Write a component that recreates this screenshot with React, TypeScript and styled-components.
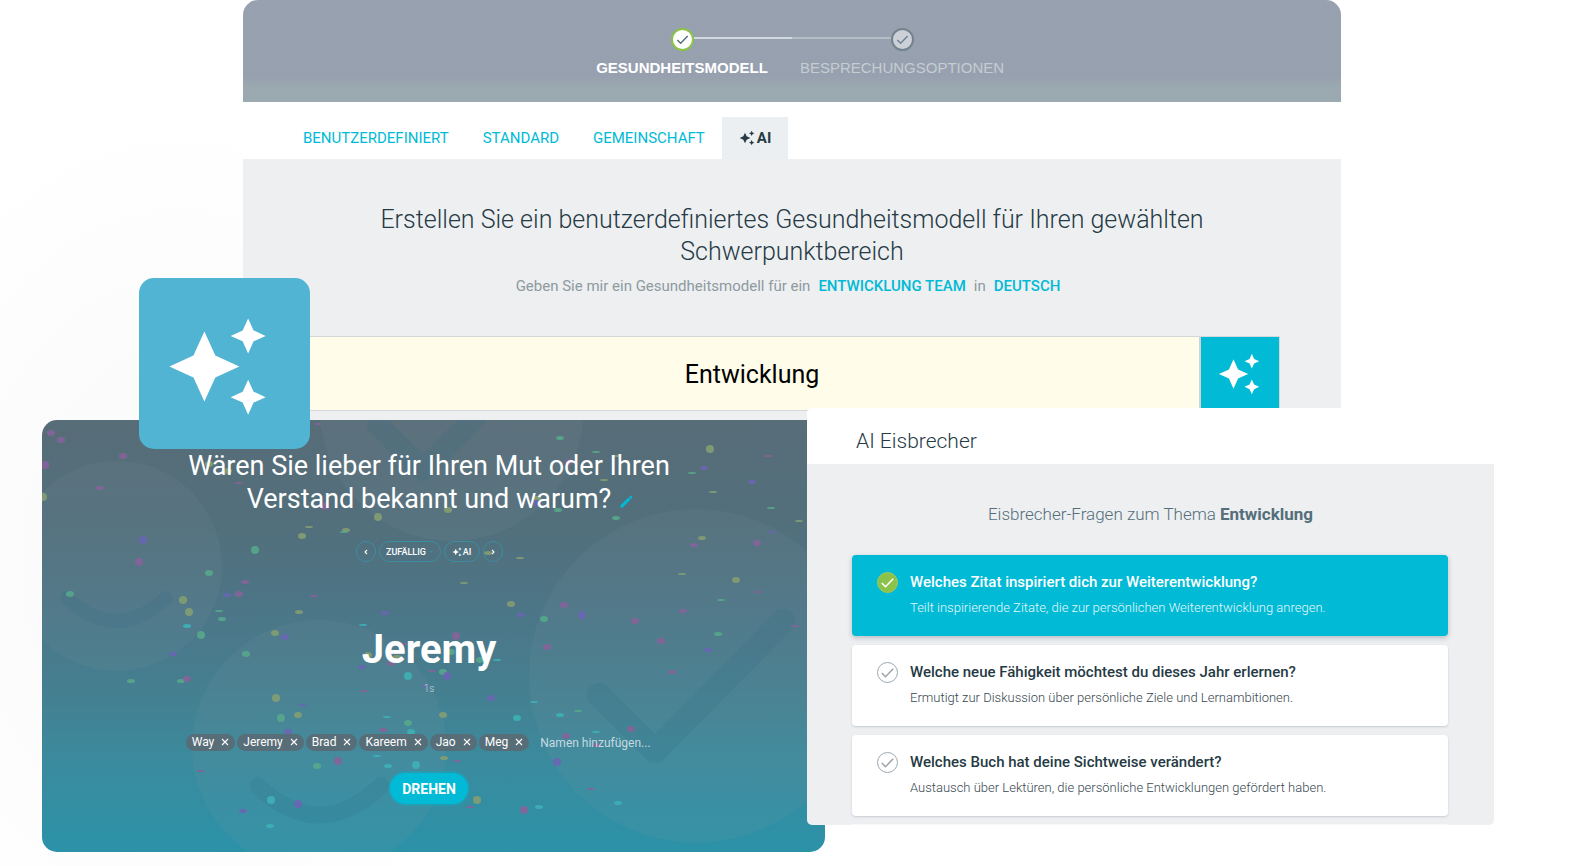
import React, { useState } from "react";
import styled, { createGlobalStyle, css } from "styled-components";

const GlobalStyle = createGlobalStyle`
  *, *::before, *::after { box-sizing: border-box; }
  body {
    margin: 0;
    background: radial-gradient(ellipse 340px 460px at 180px 560px, #f9f9f9, #ffffff);
    font-family: Roboto, "Liberation Sans", sans-serif;
    color: #263a44;
  }
  button, input, select { font: inherit; color: inherit; margin: 0; border: 0; padding: 0; background: none; }
  button, select, a { cursor: pointer; }
  h1, h2, h3, p, ul, ol { margin: 0; padding: 0; font-size: inherit; font-weight: inherit; list-style: none; }
`;

const cyan = "#00bad6";

/* ---------- stage: overlapping panels share one grid row ---------- */

const Stage = styled.main`
  display: grid;
  grid-template-columns:
    minmax(0, 42fr) minmax(0, 97fr) minmax(0, 104fr) minmax(0, 67fr) minmax(0, 497fr)
    minmax(0, 18fr) minmax(0, 516fr) minmax(0, 153fr) minmax(0, 91fr);
  align-items: start;
  padding-bottom: 14px;
`;

const ModelPanel = styled.section`
  grid-area: 1 / 4 / 2 / 8;
  border-radius: 15px 15px 0 0;
  overflow: hidden;
  background: #edeff1;
`;

const SpinPanel = styled.section`
  grid-area: 1 / 2 / 2 / 7;
  margin-top: 420px;
  position: relative;
  overflow: hidden;
  border-radius: 15px;
  color: #fff;
  background: linear-gradient(#576d78 0%, #526f7c 25%, #4d7586 42%, #457f90 62%, #3a8b9e 80%, #2b92a8 100%);
`;

const Tile = styled.div`
  grid-area: 1 / 3 / 2 / 5;
  z-index: 1;
  margin-top: 278px;
  height: 171px;
  display: grid;
  place-items: center;
  padding: 6px 14px 0 0;
  border-radius: 15px;
  background: #51b4d3;
  color: #fff;
`;

const IcePanel = styled.section`
  grid-area: 1 / 6 / 2 / 9;
  z-index: 1;
  margin-top: 408px;
  border-radius: 5px;
  overflow: hidden;
  background: #edeff1;
`;

/* ---------- icons ---------- */

const Sparkles = ({ size }: { size: number }) => (
  <svg width={size} height={size} viewBox="0 0 24 24" fill="currentColor" aria-hidden="true">
    <path d="M19 9l1.25-2.75L23 5l-2.75-1.25L19 1l-1.25 2.75L15 5l2.75 1.25L19 9zM11.5 9.5L9 4 6.5 9.5 1 12l5.5 2.5L9 20l2.5-5.5L17 12l-5.5-2.5zM19 15l-1.25 2.75L15 19l2.75 1.25L19 23l1.25-2.75L23 19l-2.75-1.25L19 15z" />
  </svg>
);

const Tick = ({ color, size = 21 }: { color: string; size?: number }) => (
  <svg width={size} height={size} viewBox="0 0 21 21" fill="none" stroke={color} strokeWidth="1.6" aria-hidden="true">
    <path d="M4.800 11l3.700 3.700L16.200 6.700" />
  </svg>
);

const Pencil = () => (
  <svg width="13" height="13" viewBox="0 0 24 24" fill={cyan} aria-hidden="true">
    <path d="M1 19v4h4L19.500 8.500l-4-4L1 19zM22.600 5.400a1.300 1.300 0 0 0 0-1.800l-2.200-2.200a1.300 1.300 0 0 0-1.800 0l-2 2 4 4 2-2z" />
  </svg>
);

const Chevron = ({ flip }: { flip?: boolean }) => (
  <svg width="6" height="6" viewBox="0 0 6 6" fill="none" stroke="currentColor" strokeWidth="1.1" aria-hidden="true">
    <path d={flip ? "M2 1l2 2-2 2" : "M4 1L2 3l2 2"} />
  </svg>
);

const Cross = () => (
  <svg width="8" height="8" viewBox="0 0 8 8" stroke="currentColor" strokeWidth="1.1" aria-hidden="true">
    <path d="M1 1l6 6M7 1L1 7" />
  </svg>
);

/* ---------- model panel ---------- */

const StepBar = styled.header`
  height: 102px;
  padding-top: 28px;
  background: linear-gradient(#97a1b0 0, #97a0af 74%, #9aa9af 86%, #9aaab0 100%);
`;

const Steps = styled.ol`
  display: flex;
  justify-content: center;
`;

const Step = styled.li<{ $active?: boolean }>`
  width: 220px;
  display: grid;
  justify-items: center;
  gap: 7px;
  font: ${(p) => (p.$active ? "bold" : "normal")} 15px/20px "Liberation Sans", Arial, sans-serif;
  color: ${(p) => (p.$active ? "#fff" : "#c5cdd2")};
`;

const StepTrack = styled.span<{ $active?: boolean }>`
  width: 100%;
  display: grid;
  grid-template-columns: 1fr 23px 1fr;
  align-items: center;
  &::before, &::after { content: ""; height: 2px; margin-bottom: 3px; }
  ${(p) => p.$active
    ? css`&::after { background: #d3dadd; }`
    : css`&::before { background: #b3bec4; }`}
`;

const StepDot = styled.span<{ $active?: boolean }>`
  height: 23px;
  display: grid;
  place-items: center;
  border-radius: 50%;
  border: 2px solid ${(p) => (p.$active ? "#8bc34a" : "#72838e")};
  background: ${(p) => (p.$active ? "#fff" : "#cbd1d6")};
`;

const Tabs = styled.nav`
  display: flex;
  padding: 15px 43px 0;
  background: #fff;
`;

const Tab = styled.button<{ $active?: boolean }>`
  height: 42px;
  display: flex;
  align-items: center;
  gap: 2px;
  padding: 0 17px;
  font-size: 15px;
  line-height: 20px;
  color: ${cyan};
  white-space: nowrap;
  ${(p) => p.$active && css`background: #ebeff2; color: #263a44; font-weight: 700;`}
`;

const ModelBody = styled.div`
  padding: 45px 61px 9px;
  text-align: center;
`;

const ModelTitle = styled.h1`
  max-width: 860px;
  margin: 0 auto;
  font-size: 25px;
  line-height: 32px;
  font-weight: 300;
`;

const ModelHint = styled.p`
  display: flex;
  justify-content: center;
  gap: 8px;
  margin: 8px 0 40px;
  padding-right: 8px;
  font-size: 15px;
  line-height: 20px;
  color: #8e9a9f;
  a { color: ${cyan}; font-weight: 500; text-decoration: none; }
`;

const TopicRow = styled.form`
  display: grid;
  grid-template-columns: 1fr 80px;
  height: 75px;
  border: 1px solid #d3d8db;
`;

const TopicInput = styled.input`
  min-width: 0;
  padding-top: 2px;
  text-align: center;
  font-size: 25px;
  line-height: 30px;
  color: #000;
  background: #fffde9;
`;

const TopicButton = styled.button`
  display: grid;
  place-items: center;
  border-left: 2px solid #cdd3d6;
  padding-right: 3px;
  background: ${cyan};
  color: #fff;
`;

/* ---------- spinner panel ---------- */

const Backdrop = styled.svg`
  position: absolute;
  inset: 0;
  width: 100%;
  height: 100%;
`;

const SpinBody = styled.div`
  position: relative;
  display: flex;
  flex-direction: column;
  align-items: center;
  padding: 30px 9px 48px 0;
`;

const Question = styled.h2`
  width: 520px;
  text-align: center;
  font-size: 27px;
  line-height: 33px;
`;

const EditButton = styled.button`
  width: 0;
  overflow: visible;
  white-space: nowrap;
  padding-left: 9px;
  margin-right: -9px;
  line-height: 13px;
`;

const Pills = styled.div`
  display: flex;
  gap: 3px;
  margin-top: 25px;
`;

const pill = css`
  height: 21px;
  display: flex;
  align-items: center;
  justify-content: center;
  border: 1px solid #3b8ea1;
  border-radius: 11px;
  font-size: 9px;
  line-height: 12px;
  font-weight: 500;
`;

const PillButton = styled.button<{ $round?: boolean }>`
  ${pill}
  width: ${(p) => (p.$round ? "20px" : "36px")};
  gap: 1px;
`;

const PillSelect = styled.span`
  ${pill}
  width: 62px;
  gap: 3px;
  &::after {
    content: "";
    border: 2px solid transparent;
    border-top-color: #3b8ea1;
    border-bottom: 0;
  }
  select { appearance: none; outline: 0; }
  option { color: #263a44; }
`;

const Winner = styled.p`
  margin-top: 64px;
  font-size: 40px;
  line-height: 48px;
  font-weight: 700;
`;

const Timer = styled.p`
  margin-top: 9px;
  font-size: 10px;
  line-height: 12px;
  font-weight: 300;
  color: #c3d5dc;
`;

const Names = styled.ul`
  display: flex;
  align-items: center;
  gap: 2px;
  margin-top: 37px;
`;

const Chip = styled.li`
  height: 17px;
  display: flex;
  align-items: center;
  gap: 7px;
  padding: 0 6px;
  border-radius: 9px;
  background: #576d78;
  font-size: 12px;
  line-height: 17px;
  button { display: grid; }
`;

const NameInput = styled.input`
  width: 141px;
  padding-left: 9px;
  font-size: 12px;
  line-height: 17px;
  &::placeholder { color: #c4dae0; opacity: 1; }
`;

const SpinButton = styled.button`
  height: 31px;
  margin-top: 21px;
  padding: 0 12px;
  border-radius: 16px;
  background: ${cyan};
  box-shadow: 0 0 0 2px rgba(0, 186, 214, 0.3);
  font-size: 14px;
  line-height: 20px;
  font-weight: 700;
`;

type Hue = "p" | "o" | "g" | "v" | "t";
const hues: Record<Hue, string> = { p: "#86639a", o: "#839d72", g: "#57a78b", v: "#6966b2", t: "#3eb0b6" };

/* x, y, half height, hue */
const confetti: [number, number, number, Hue][] = [
  [51, 433, 3, "p"], [61, 440, 3, "p"], [123, 456, 3, "p"], [45, 465, 4, "p"], [100, 488, 2, "p"],
  [43, 497, 4, "o"], [318, 424, 1, "p"], [209, 464, 3, "o"], [228, 471, 3, "o"], [239, 483, 1, "p"],
  [325, 506, 4, "p"], [378, 517, 4, "o"], [309, 527, 1, "o"], [302, 536, 3, "o"], [346, 530, 2, "o"],
  [344, 532, 1, "g"], [255, 550, 4, "g"], [143, 540, 4, "v"], [139, 562, 4, "p"], [209, 573, 3, "g"],
  [245, 582, 2, "p"], [227, 595, 2, "v"], [239, 594, 3, "p"], [314, 596, 1, "p"], [70, 594, 3, "g"],
  [183, 600, 4, "o"], [189, 612, 4, "o"], [219, 611, 1, "g"], [222, 619, 2, "g"], [187, 626, 2, "t"],
  [201, 635, 4, "g"], [299, 612, 2, "o"], [385, 613, 2, "v"], [363, 625, 1, "t"], [275, 633, 3, "o"],
  [285, 637, 3, "v"], [560, 438, 2, "g"], [569, 462, 3, "p"], [596, 452, 1, "g"], [616, 456, 1, "o"],
  [604, 480, 1, "o"], [710, 449, 4, "o"], [768, 456, 1, "p"], [692, 473, 1, "g"], [704, 468, 2, "v"],
  [752, 482, 2, "v"], [713, 492, 1, "o"], [771, 508, 1, "g"], [799, 521, 1, "o"], [537, 498, 2, "o"],
  [537, 503, 3, "v"], [448, 510, 3, "o"], [558, 510, 2, "g"], [616, 518, 2, "g"], [771, 532, 1, "v"],
  [702, 538, 2, "o"], [694, 545, 2, "p"], [757, 543, 3, "p"], [488, 553, 2, "o"], [520, 558, 1, "o"],
  [682, 574, 1, "o"], [464, 583, 1, "o"], [736, 580, 3, "o"], [758, 592, 1, "p"], [721, 600, 1, "g"],
  [511, 604, 3, "o"], [521, 615, 2, "v"], [544, 619, 3, "g"], [564, 605, 3, "p"], [582, 615, 4, "v"],
  [683, 611, 2, "p"], [635, 621, 3, "p"], [795, 626, 1, "p"], [718, 634, 2, "g"], [456, 636, 4, "p"],
  [547, 647, 3, "p"], [661, 641, 3, "p"], [708, 650, 2, "v"], [246, 654, 3, "g"], [173, 654, 2, "v"],
  [131, 681, 2, "g"], [181, 681, 2, "g"], [187, 679, 3, "p"], [276, 698, 4, "o"], [281, 718, 4, "g"],
  [298, 715, 3, "o"], [302, 705, 1, "v"], [288, 732, 3, "v"], [362, 667, 2, "v"], [364, 691, 1, "p"],
  [368, 655, 3, "o"], [405, 644, 1, "p"], [391, 663, 3, "p"], [397, 657, 2, "o"], [408, 676, 4, "t"],
  [425, 686, 1, "v"], [387, 717, 1, "t"], [408, 723, 3, "g"], [383, 730, 2, "p"], [411, 732, 3, "t"],
  [377, 756, 1, "t"], [338, 761, 4, "p"], [317, 766, 3, "g"], [388, 766, 2, "t"], [416, 765, 4, "t"],
  [201, 771, 1, "p"], [271, 800, 4, "t"], [298, 804, 4, "v"], [243, 811, 2, "v"], [270, 826, 2, "t"],
  [480, 660, 3, "g"], [451, 652, 3, "g"], [497, 660, 1, "t"], [432, 671, 1, "p"], [443, 672, 3, "g"],
  [447, 676, 4, "v"], [491, 698, 3, "v"], [534, 702, 1, "t"], [517, 718, 3, "t"], [443, 715, 3, "o"],
  [560, 715, 2, "t"], [578, 711, 1, "g"], [672, 672, 2, "p"], [596, 732, 1, "t"], [566, 736, 3, "p"],
  [631, 729, 3, "p"], [597, 745, 2, "p"], [557, 762, 4, "v"], [444, 758, 2, "o"], [457, 761, 1, "p"],
  [591, 789, 1, "p"], [618, 803, 2, "t"], [477, 800, 4, "o"], [470, 807, 1, "p"], [524, 810, 4, "p"],
  [539, 807, 2, "t"],
];

const SpinBackdrop = () => (
  <Backdrop viewBox="42 420 783 432" preserveAspectRatio="xMidYMid slice" aria-hidden="true">
    <g fill="#8da0a8" fillOpacity="0.1">
      <circle cx="117" cy="566" r="105" />
      <circle cx="452" cy="409" r="132" />
      <circle cx="319" cy="747" r="127" />
      <circle cx="696" cy="676" r="167" />
    </g>
    <g fill="none" stroke="#2e6c80" strokeOpacity="0.16" strokeLinecap="round" strokeLinejoin="round">
      <path d="M67 598Q116 644 166 598" strokeWidth="14" />
      <path d="M378 425l45 45 54-54" strokeWidth="22" />
      <path d="M258 786Q319 844 381 786" strokeWidth="17" />
      <path d="M599 695l56 56L783 621" strokeWidth="24" />
    </g>
    {confetti.map(([x, y, ry, hue]) => (
      <ellipse key={`${x}-${y}`} cx={x} cy={y} rx="4" ry={ry} fill={hues[hue]} fillOpacity="0.9" />
    ))}
  </Backdrop>
);

/* ---------- icebreaker panel ---------- */

const IceHeader = styled.header`
  padding: 20px 49px 10px;
  background: #fff;
  font-size: 21px;
  line-height: 26px;
  font-weight: 300;
`;

const IceTopic = styled.p`
  padding: 39px 0 30px;
  text-align: center;
  font-size: 17px;
  line-height: 22px;
  font-weight: 300;
  color: #546e7a;
  b { font-weight: 700; }
`;

const IceList = styled.ul`
  display: grid;
  gap: 9px;
  margin: 0 46px 0 45px;
  padding-bottom: 8px;
  border-bottom: 1px solid #f8f9fa;
`;

const IceCard = styled.label<{ $selected: boolean }>`
  min-height: 81px;
  display: grid;
  grid-template-columns: 21px 1fr;
  column-gap: 12px;
  row-gap: 5px;
  align-content: start;
  padding: 17px 25px;
  border-radius: 4px;
  cursor: pointer;
  color: ${(p) => (p.$selected ? "#fff" : "#263a44")};
  background: ${(p) => (p.$selected ? cyan : "#fff")};
  box-shadow: ${(p) => (p.$selected ? "0 2px 5px rgba(60, 80, 100, 0.3)" : "0 1px 2px rgba(60, 80, 100, 0.22)")};
`;

const CheckMark = styled.span<{ $selected: boolean }>`
  display: grid;
  height: 21px;
  & > * { grid-area: 1 / 1; }
  input {
    appearance: none;
    width: 21px;
    height: 21px;
    border-radius: 50%;
    border: ${(p) => (p.$selected ? "1px solid #a5c95a" : "1px solid #9aa7b0")};
    background: ${(p) => (p.$selected ? "#8bc34a" : "transparent")};
  }
  svg { pointer-events: none; }
`;

const CardTitle = styled.span`
  font-size: 15px;
  line-height: 21px;
  font-weight: 500;
`;

const CardText = styled.span<{ $selected: boolean }>`
  grid-column: 2;
  font-size: 13px;
  line-height: 20px;
  font-weight: 300;
  color: ${(p) => (p.$selected ? "#e6f8fb" : "#37474f")};
`;

const questions = [
  ["Welches Zitat inspiriert dich zur Weiterentwicklung?", "Teilt inspirierende Zitate, die zur persönlichen Weiterentwicklung anregen."],
  ["Welche neue Fähigkeit möchtest du dieses Jahr erlernen?", "Ermutigt zur Diskussion über persönliche Ziele und Lernambitionen."],
  ["Welches Buch hat deine Sichtweise verändert?", "Austausch über Lektüren, die persönliche Entwicklungen gefördert haben."],
];

const names = ["Way", "Jeremy", "Brad", "Kareem", "Jao", "Meg"];

export default function App() {
  const [selected, setSelected] = useState(0);

  return (
    <>
      <GlobalStyle />
      <Stage>
        <ModelPanel>
          <StepBar>
            <Steps>
              <Step $active>
                <StepTrack $active><StepDot $active><Tick size={19} color="#546e7a" /></StepDot></StepTrack>
                GESUNDHEITSMODELL
              </Step>
              <Step>
                <StepTrack><StepDot><Tick size={19} color="#6f7f94" /></StepDot></StepTrack>
                BESPRECHUNGSOPTIONEN
              </Step>
            </Steps>
          </StepBar>
          <Tabs>
            <Tab>BENUTZERDEFINIERT</Tab>
            <Tab>STANDARD</Tab>
            <Tab>GEMEINSCHAFT</Tab>
            <Tab $active><Sparkles size={16} />AI</Tab>
          </Tabs>
          <ModelBody>
            <ModelTitle>Erstellen Sie ein benutzerdefiniertes Gesundheitsmodell für Ihren gewählten Schwerpunktbereich</ModelTitle>
            <ModelHint>
              <span>Geben Sie mir ein Gesundheitsmodell für ein</span>
              <a href="#team">ENTWICKLUNG TEAM</a>
              <span>in</span>
              <a href="#sprache">DEUTSCH</a>
            </ModelHint>
            <TopicRow onSubmit={(e) => e.preventDefault()}>
              <TopicInput aria-label="Schwerpunktbereich" defaultValue="Entwicklung" />
              <TopicButton aria-label="Erstellen"><Sparkles size={44} /></TopicButton>
            </TopicRow>
          </ModelBody>
        </ModelPanel>

        <SpinPanel>
          <SpinBackdrop />
          <SpinBody>
            <Question>
              Wären Sie lieber für Ihren Mut oder Ihren Verstand bekannt und warum?
              <EditButton aria-label="Frage bearbeiten"><Pencil /></EditButton>
            </Question>
            <Pills>
              <PillButton $round aria-label="Vorherige Frage"><Chevron /></PillButton>
              <PillSelect>
                <select aria-label="Kategorie" defaultValue="random"><option value="random">ZUFÄLLIG</option></select>
              </PillSelect>
              <PillButton><Sparkles size={10} />AI</PillButton>
              <PillButton $round aria-label="Nächste Frage"><Chevron flip /></PillButton>
            </Pills>
            <Winner>Jeremy</Winner>
            <Timer>1s</Timer>
            <Names>
              {names.map((name) => (
                <Chip key={name}>{name}<button aria-label={`${name} entfernen`}><Cross /></button></Chip>
              ))}
              <li><NameInput aria-label="Namen hinzufügen" placeholder="Namen hinzufügen..." /></li>
            </Names>
            <SpinButton>DREHEN</SpinButton>
          </SpinBody>
        </SpinPanel>

        <Tile><Sparkles size={105} /></Tile>

        <IcePanel>
          <IceHeader><h2>AI Eisbrecher</h2></IceHeader>
          <IceTopic>Eisbrecher-Fragen zum Thema <b>Entwicklung</b></IceTopic>
          <IceList>
            {questions.map(([title, text], i) => (
              <li key={title}>
                <IceCard $selected={i === selected}>
                  <CheckMark $selected={i === selected}>
                    <input type="radio" name="question" checked={i === selected} onChange={() => setSelected(i)} />
                    <Tick color={i === selected ? "#fff" : "#9aa7b0"} />
                  </CheckMark>
                  <CardTitle>{title}</CardTitle>
                  <CardText $selected={i === selected}>{text}</CardText>
                </IceCard>
              </li>
            ))}
          </IceList>
        </IcePanel>
      </Stage>
    </>
  );
}
